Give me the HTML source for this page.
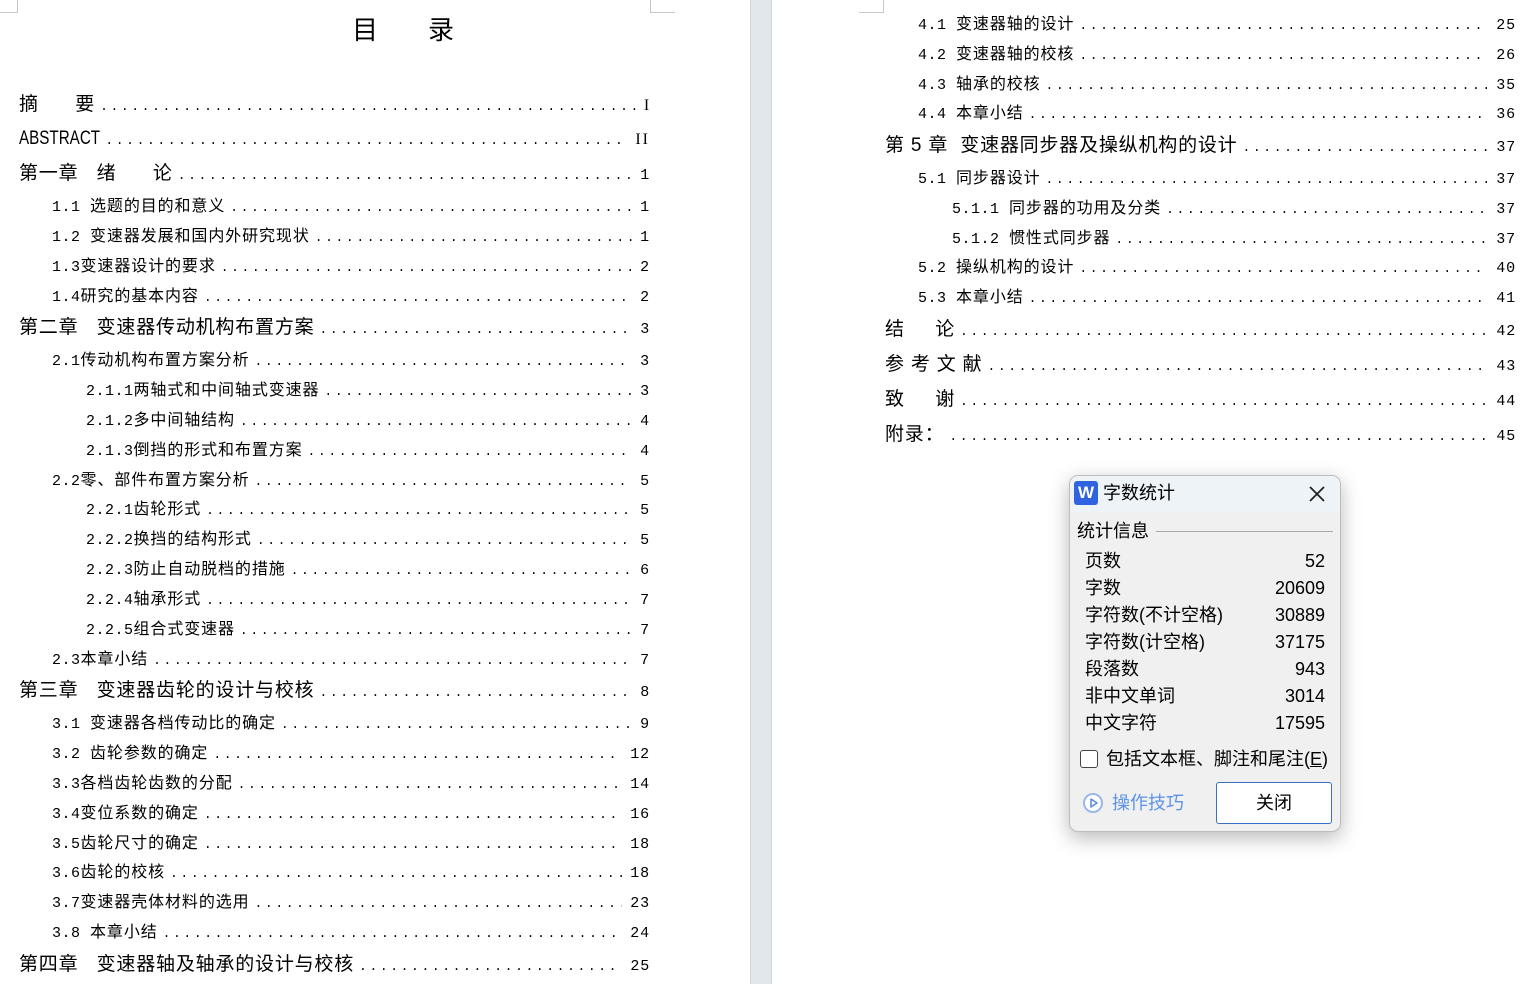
<!DOCTYPE html>
<html><head><meta charset="utf-8"><style>
*{margin:0;padding:0;box-sizing:border-box}
body{width:1525px;height:984px;overflow:hidden;background:#fff;position:relative;font-family:"Liberation Sans","Noto Sans CJK SC",sans-serif;color:#000}
.gut{position:absolute;left:750px;top:0;width:22px;height:984px;background:#e2e7eb;border-left:1px solid #d0d6da;border-right:1px solid #d0d6da}
.cm{position:absolute;border-color:#c8c8c8;border-style:solid;border-width:0}
.r{position:absolute;display:flex;align-items:baseline;white-space:nowrap;height:24px;line-height:24px}
.r .d{flex:1;overflow:hidden;white-space:nowrap;font-family:"Liberation Mono",monospace;letter-spacing:2.6px;margin:0 8px 0 5px;font-size:13px}
.r .n{font-family:"Liberation Mono",monospace;font-size:15px}
.c{font-size:19px;letter-spacing:0.8px}
.s{font-size:16px;letter-spacing:0.9px}
.s .num{font-family:"Liberation Mono",monospace;font-size:15px;letter-spacing:0.5px}
.dlg{position:absolute;left:1069px;top:475px;width:272px;height:357px;background:#f0f0f0;border:1px solid #bdbdbd;border-radius:9px;box-shadow:0 6px 20px rgba(0,0,0,.28);overflow:hidden;font-family:"Liberation Sans","Noto Sans CJK SC",sans-serif;font-size:18px}
.tb{position:absolute;left:0;top:0;width:100%;height:36px;background:#edf3f7}
.row{position:absolute;left:15px;width:240px;display:flex;justify-content:space-between;font-size:18px;line-height:24px}
</style></head><body>
<div class="gut"></div>
<div class="cm" style="left:0;top:0;width:18px;height:13px;border-right-width:1px;border-bottom-width:1px"></div>
<div class="cm" style="left:650px;top:0;width:25px;height:13px;border-left-width:1px;border-bottom-width:1px"></div>
<div class="cm" style="left:859px;top:0;width:25px;height:13px;border-right-width:1px;border-bottom-width:1px"></div>

<div style="position:absolute;left:352px;top:14px;font-size:26px;line-height:32px;letter-spacing:0">目<span style="display:inline-block;width:50px"></span>录</div>

<!-- left page -->
<div class="r c" style="left:19px;width:631px;top:93px"><span>摘&nbsp;&nbsp;&nbsp;&nbsp;&nbsp;&nbsp;要</span><span class="d">..........................................................................</span><span class="n" style="font-family:'Liberation Serif',serif;font-size:16px">I</span></div>
<div class="r c" style="left:19px;width:631px;top:127px"><span style="display:inline-block;transform:scaleX(0.8);transform-origin:left;margin-right:-20px;letter-spacing:0">ABSTRACT</span><span class="d">..........................................................................</span><span class="n" style="font-family:'Liberation Serif',serif;font-size:16px;letter-spacing:2px">II</span></div>
<div class="r c" style="left:19px;width:631px;top:162px"><span>第一章&nbsp;&nbsp;&nbsp;绪&nbsp;&nbsp;&nbsp;&nbsp;&nbsp;&nbsp;论</span><span class="d">..........................................................................</span><span class="n">1</span></div>
<div class="r s" style="left:52px;width:598px;top:195px"><span><span class="num">1.1 </span>选题的目的和意义</span><span class="d">..........................................................................</span><span class="n">1</span></div>
<div class="r s" style="left:52px;width:598px;top:225px"><span><span class="num">1.2 </span>变速器发展和国内外研究现状</span><span class="d">..........................................................................</span><span class="n">1</span></div>
<div class="r s" style="left:52px;width:598px;top:255px"><span><span class="num">1.3</span>变速器设计的要求</span><span class="d">..........................................................................</span><span class="n">2</span></div>
<div class="r s" style="left:52px;width:598px;top:285px"><span><span class="num">1.4</span>研究的基本内容</span><span class="d">..........................................................................</span><span class="n">2</span></div>
<div class="r c" style="left:19px;width:631px;top:316px"><span>第二章&nbsp;&nbsp;&nbsp;变速器传动机构布置方案</span><span class="d">..........................................................................</span><span class="n">3</span></div>
<div class="r s" style="left:52px;width:598px;top:349px"><span><span class="num">2.1</span>传动机构布置方案分析</span><span class="d">..........................................................................</span><span class="n">3</span></div>
<div class="r s" style="left:86px;width:564px;top:379px"><span><span class="num">2.1.1</span>两轴式和中间轴式变速器</span><span class="d">..........................................................................</span><span class="n">3</span></div>
<div class="r s" style="left:86px;width:564px;top:409px"><span><span class="num">2.1.2</span>多中间轴结构</span><span class="d">..........................................................................</span><span class="n">4</span></div>
<div class="r s" style="left:86px;width:564px;top:439px"><span><span class="num">2.1.3</span>倒挡的形式和布置方案</span><span class="d">..........................................................................</span><span class="n">4</span></div>
<div class="r s" style="left:52px;width:598px;top:469px"><span><span class="num">2.2</span>零、部件布置方案分析</span><span class="d">..........................................................................</span><span class="n">5</span></div>
<div class="r s" style="left:86px;width:564px;top:498px"><span><span class="num">2.2.1</span>齿轮形式</span><span class="d">..........................................................................</span><span class="n">5</span></div>
<div class="r s" style="left:86px;width:564px;top:528px"><span><span class="num">2.2.2</span>换挡的结构形式</span><span class="d">..........................................................................</span><span class="n">5</span></div>
<div class="r s" style="left:86px;width:564px;top:558px"><span><span class="num">2.2.3</span>防止自动脱档的措施</span><span class="d">..........................................................................</span><span class="n">6</span></div>
<div class="r s" style="left:86px;width:564px;top:588px"><span><span class="num">2.2.4</span>轴承形式</span><span class="d">..........................................................................</span><span class="n">7</span></div>
<div class="r s" style="left:86px;width:564px;top:618px"><span><span class="num">2.2.5</span>组合式变速器</span><span class="d">..........................................................................</span><span class="n">7</span></div>
<div class="r s" style="left:52px;width:598px;top:648px"><span><span class="num">2.3</span>本章小结</span><span class="d">..........................................................................</span><span class="n">7</span></div>
<div class="r c" style="left:19px;width:631px;top:679px"><span>第三章&nbsp;&nbsp;&nbsp;变速器齿轮的设计与校核</span><span class="d">..........................................................................</span><span class="n">8</span></div>
<div class="r s" style="left:52px;width:598px;top:712px"><span><span class="num">3.1 </span>变速器各档传动比的确定</span><span class="d">..........................................................................</span><span class="n">9</span></div>
<div class="r s" style="left:52px;width:598px;top:742px"><span><span class="num">3.2 </span>齿轮参数的确定</span><span class="d">..........................................................................</span><span class="n">12</span></div>
<div class="r s" style="left:52px;width:598px;top:772px"><span><span class="num">3.3</span>各档齿轮齿数的分配</span><span class="d">..........................................................................</span><span class="n">14</span></div>
<div class="r s" style="left:52px;width:598px;top:802px"><span><span class="num">3.4</span>变位系数的确定</span><span class="d">..........................................................................</span><span class="n">16</span></div>
<div class="r s" style="left:52px;width:598px;top:832px"><span><span class="num">3.5</span>齿轮尺寸的确定</span><span class="d">..........................................................................</span><span class="n">18</span></div>
<div class="r s" style="left:52px;width:598px;top:861px"><span><span class="num">3.6</span>齿轮的校核</span><span class="d">..........................................................................</span><span class="n">18</span></div>
<div class="r s" style="left:52px;width:598px;top:891px"><span><span class="num">3.7</span>变速器壳体材料的选用</span><span class="d">..........................................................................</span><span class="n">23</span></div>
<div class="r s" style="left:52px;width:598px;top:921px"><span><span class="num">3.8 </span>本章小结</span><span class="d">..........................................................................</span><span class="n">24</span></div>
<div class="r c" style="left:19px;width:631px;top:953px"><span>第四章&nbsp;&nbsp;&nbsp;变速器轴及轴承的设计与校核</span><span class="d">..........................................................................</span><span class="n">25</span></div>

<!-- right page -->
<div class="r s" style="left:918px;width:598px;top:13px"><span><span class="num">4.1 </span>变速器轴的设计</span><span class="d">..........................................................................</span><span class="n">25</span></div>
<div class="r s" style="left:918px;width:598px;top:43px"><span><span class="num">4.2 </span>变速器轴的校核</span><span class="d">..........................................................................</span><span class="n">26</span></div>
<div class="r s" style="left:918px;width:598px;top:73px"><span><span class="num">4.3 </span>轴承的校核</span><span class="d">..........................................................................</span><span class="n">35</span></div>
<div class="r s" style="left:918px;width:598px;top:102px"><span><span class="num">4.4 </span>本章小结</span><span class="d">..........................................................................</span><span class="n">36</span></div>
<div class="r c" style="left:885px;width:631px;top:134px"><span>第 5 章&nbsp;&nbsp;变速器同步器及操纵机构的设计</span><span class="d">..........................................................................</span><span class="n">37</span></div>
<div class="r s" style="left:918px;width:598px;top:167px"><span><span class="num">5.1 </span>同步器设计</span><span class="d">..........................................................................</span><span class="n">37</span></div>
<div class="r s" style="left:952px;width:564px;top:197px"><span><span class="num">5.1.1 </span>同步器的功用及分类</span><span class="d">..........................................................................</span><span class="n">37</span></div>
<div class="r s" style="left:952px;width:564px;top:227px"><span><span class="num">5.1.2 </span>惯性式同步器</span><span class="d">..........................................................................</span><span class="n">37</span></div>
<div class="r s" style="left:918px;width:598px;top:256px"><span><span class="num">5.2 </span>操纵机构的设计</span><span class="d">..........................................................................</span><span class="n">40</span></div>
<div class="r s" style="left:918px;width:598px;top:286px"><span><span class="num">5.3 </span>本章小结</span><span class="d">..........................................................................</span><span class="n">41</span></div>
<div class="r c" style="left:885px;width:631px;top:318px"><span>结&nbsp;&nbsp;&nbsp;&nbsp;&nbsp;论</span><span class="d">..........................................................................</span><span class="n">42</span></div>
<div class="r c" style="left:885px;width:631px;top:353px"><span>参&nbsp;考&nbsp;文&nbsp;献</span><span class="d">..........................................................................</span><span class="n">43</span></div>
<div class="r c" style="left:885px;width:631px;top:388px"><span>致&nbsp;&nbsp;&nbsp;&nbsp;&nbsp;谢</span><span class="d">..........................................................................</span><span class="n">44</span></div>
<div class="r c" style="left:885px;width:631px;top:423px"><span>附录：</span><span class="d">..........................................................................</span><span class="n">45</span></div>

<!-- dialog -->
<div class="dlg">
  <div class="tb"></div>
  <div style="position:absolute;left:4px;top:5px;width:24px;height:24px;background:#2f63e0;border-radius:3px;color:#fff;font-weight:bold;font-size:17px;line-height:24px;text-align:center">W</div>
  <div style="position:absolute;left:33px;top:4px;line-height:26px">字数统计</div>
  <svg style="position:absolute;left:238px;top:9px" width="18" height="18" viewBox="0 0 18 18"><path d="M2 2L16 16M16 2L2 16" stroke="#222" stroke-width="1.8"/></svg>
  <div style="position:absolute;left:7px;top:43px;line-height:24px">统计信息</div>
  <div style="position:absolute;left:86px;top:55px;width:177px;height:1px;background:#a8a8a8"></div>
  <div class="row" style="top:73px"><span>页数</span><span>52</span></div>
  <div class="row" style="top:100px"><span>字数</span><span>20609</span></div>
  <div class="row" style="top:127px"><span>字符数(不计空格)</span><span>30889</span></div>
  <div class="row" style="top:154px"><span>字符数(计空格)</span><span>37175</span></div>
  <div class="row" style="top:181px"><span>段落数</span><span>943</span></div>
  <div class="row" style="top:208px"><span>非中文单词</span><span>3014</span></div>
  <div class="row" style="top:235px"><span>中文字符</span><span>17595</span></div>
  <div style="position:absolute;left:10px;top:274px;width:18px;height:18px;border:1.5px solid #444;border-radius:3px;background:#fff"></div>
  <div style="position:absolute;left:36px;top:271px;line-height:24px">包括文本框、脚注和尾注(<u>E</u>)</div>
  <svg style="position:absolute;left:12px;top:316px" width="22" height="22" viewBox="0 0 22 22"><circle cx="11" cy="11" r="9" fill="#fff" stroke="#9ab8e6" stroke-width="2"/><path d="M9 7L15 11L9 15Z" fill="none" stroke="#5a8fe0" stroke-width="1.6" stroke-linejoin="round"/></svg>
  <div style="position:absolute;left:42px;top:315px;line-height:24px;color:#5d93e6">操作技巧</div>
  <div style="position:absolute;left:146px;top:306px;width:116px;height:42px;background:#fff;border:1px solid #3a6fc8;border-radius:3px;text-align:center;line-height:40px">关闭</div>
</div>
</body></html>
